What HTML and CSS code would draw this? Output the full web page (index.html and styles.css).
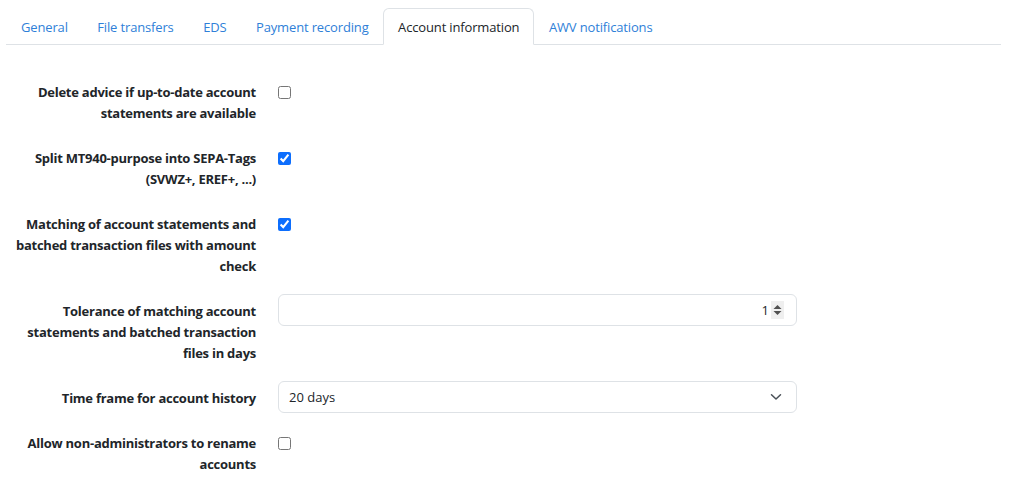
FILE: index.html
```html
<!DOCTYPE html>
<html lang="en">
<head>
    <meta charset="UTF-8">
    <meta name="viewport" content="width=device-width, initial-scale=1.0">
    <title>Account information</title>
    <link rel="stylesheet" href="styles.css">
</head>
<body>
<div class="page">

    <ul class="tabs">
        <li><a href="#" class="tab">General</a></li>
        <li><a href="#" class="tab">File transfers</a></li>
        <li><a href="#" class="tab">EDS</a></li>
        <li><a href="#" class="tab">Payment recording</a></li>
        <li><a href="#" class="tab active">Account information</a></li>
        <li><a href="#" class="tab">AWV notifications</a></li>
    </ul>

    <form class="settings">

        <div class="row">
            <label class="rowLabel" for="deleteAdvice">Delete advice if up-to-date account<br>statements are available</label>
            <div class="checkCell"><input type="checkbox" id="deleteAdvice"></div>
        </div>

        <div class="row">
            <label class="rowLabel" for="splitTags">Split MT940-purpose into SEPA-Tags<br>(SVWZ+, EREF+, ...)</label>
            <div class="checkCell"><input type="checkbox" id="splitTags" checked></div>
        </div>

        <div class="row">
            <label class="rowLabel" for="amountCheck">Matching of account statements and<br>batched transaction files with amount<br>check</label>
            <div class="checkCell"><input type="checkbox" id="amountCheck" checked></div>
        </div>

        <div class="row">
            <label class="rowLabel" for="tolerance">Tolerance of matching account<br>statements and batched transaction<br>files in days</label>
            <div class="field">
                <input type="number" id="tolerance" class="numberInput" value="1" min="0">
                <span class="spinner">
                    <svg width="9" height="12" viewBox="0 0 9 12">
                        <path d="M0.5 5 L4.5 1 L8.5 5 Z" fill="#505050"/>
                        <path d="M0.5 7 L4.5 11 L8.5 7 Z" fill="#505050"/>
                    </svg>
                </span>
            </div>
        </div>

        <div class="row">
            <label class="rowLabel" for="timeFrame">Time frame for account history</label>
            <div class="field">
                <select id="timeFrame" class="selectInput">
                    <option>10 days</option>
                    <option selected>20 days</option>
                    <option>30 days</option>
                </select>
                <svg class="chevron" width="12" height="8" viewBox="0 0 12 8">
                    <path d="M1.5 1.8 L6 6 L10.5 1.8" fill="none" stroke="#495057" stroke-width="1.5" stroke-linecap="round" stroke-linejoin="round"/>
                </svg>
            </div>
        </div>

        <div class="row">
            <label class="rowLabel" for="rename">Allow non-administrators to rename<br>accounts</label>
            <div class="checkCell"><input type="checkbox" id="rename"></div>
        </div>

    </form>
</div>
</body>
</html>
```

FILE: styles.css
```css
body {
    margin: 0;
    background-color: #ffffff;
    color: #212529;
    font-family: "Open Sans", "Noto Sans", sans-serif;
    font-size: 13px;
}

.page {
    padding: 8px 15px 0 6px;
}

/* tabs */
.tabs {
    display: flex;
    list-style: none;
    margin: 0;
    padding: 0;
    border-bottom: 1px solid #dee2e6;
}

.tab {
    display: block;
    padding: 8px 13.5px 6px 14px;
    line-height: 21px;
    letter-spacing: -0.15px;
    border: 1px solid transparent;
    border-top-left-radius: 6px;
    border-top-right-radius: 6px;
    margin-bottom: -1px;
    color: #2f7fd8;
    text-decoration: none;
}

.tab.active {
    color: #212529;
    background-color: #ffffff;
    border-color: #dee2e6 #dee2e6 #ffffff;
}

/* form rows */
.settings {
    padding-top: 30px;
}

.row {
    display: grid;
    grid-template-columns: 250px 519px;
    column-gap: 22px;
    margin-bottom: 10px;
}

.rowLabel {
    padding: 7px 0;
    line-height: 21px;
    letter-spacing: -0.25px;
    text-align: right;
    font-weight: bold;
}

.checkCell {
    padding-top: 10px;
}

.checkCell input {
    width: 13px;
    height: 13px;
    margin: 0;
    accent-color: #0d6efd;
}

.field {
    display: flex;
    align-items: center;
    height: 32px;
    box-sizing: border-box;
    border: 1px solid #dee2e6;
    border-radius: 6px;
    background-color: #ffffff;
    padding: 0 12px 0 10px;
}

.numberInput {
    flex: 1;
    border: none;
    outline: none;
    padding: 0;
    text-align: right;
    font-family: inherit;
    font-size: 13px;
    color: #212529;
    -moz-appearance: textfield;
}

.numberInput::-webkit-inner-spin-button,
.numberInput::-webkit-outer-spin-button {
    -webkit-appearance: none;
    margin: 0;
}

.spinner {
    display: flex;
    align-items: center;
    justify-content: center;
    width: 13px;
    height: 18px;
    margin-left: 2px;
    background-color: #efefef;
}

.selectInput {
    flex: 1;
    border: none;
    outline: none;
    padding: 0;
    background: transparent;
    -webkit-appearance: none;
    appearance: none;
    font-family: inherit;
    font-size: 13px;
    color: #212529;
}

.chevron {
    margin-right: 2px;
}
```
